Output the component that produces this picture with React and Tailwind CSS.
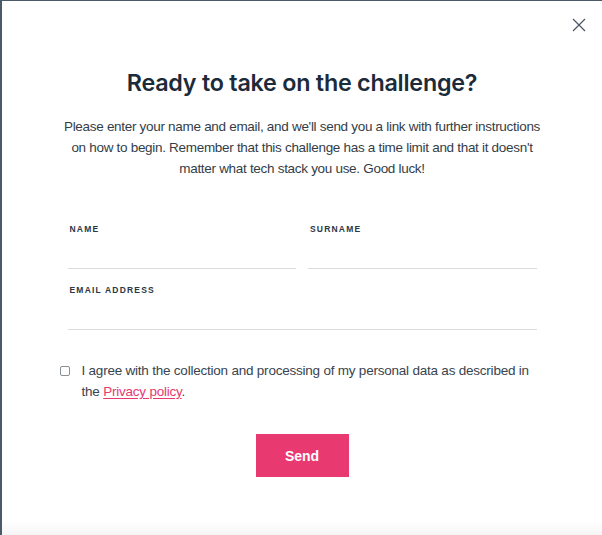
import React, { useState } from 'react';

function CloseIcon() {
  return (
    <svg width="14" height="14" viewBox="0 0 14 14" fill="none" stroke="#4b5563" strokeWidth="1.2">
      <path d="M1 1 L13 13 M13 1 L1 13" />
    </svg>
  );
}

function Field({ label, className = '' }) {
  return (
    <label className={`flex flex-col ${className}`}>
      <span className="pl-[2px] text-[8.5px] font-bold uppercase tracking-[0.14em] text-[#2b3846] leading-[12px]">
        {label}
      </span>
      <input className="mt-[22px] h-[12px] border-b-[1.5px] border-[#dcdcdc] outline-none bg-transparent" />
    </label>
  );
}

export default function App() {
  const [agreed, setAgreed] = useState(false);

  return (
    <div
      className="relative h-[535px] w-full overflow-hidden border-l-2 border-t border-[#4b5a69] bg-white text-[#2b3846]"
      style={{ fontFamily: '"Liberation Sans", Arial, sans-serif' }}
    >
      <button className="absolute right-[16px] top-[17px] p-0" aria-label="Close">
        <CloseIcon />
      </button>

      <div className="flex flex-col items-center pt-[66px]">
        <h1 className="font-['Inter',sans-serif] text-[23.3px] font-semibold leading-[32px] tracking-[-0.01em] text-[#1c2b3a]">
          Ready to take on the challenge?
        </h1>

        <p className="mt-[17px] whitespace-nowrap text-center text-[13.5px] leading-[21px] tracking-[-0.3px] text-[#333d47]">
          Please enter your name and email, and we'll send you a link with further instructions
          <br />
          on how to begin. Remember that this challenge has a time limit and that it doesn't
          <br />
          matter what tech stack you use. Good luck!
        </p>

        <form className="mt-[44px] flex w-[469px] flex-col" onSubmit={(e) => e.preventDefault()}>
          <div className="grid grid-cols-2 gap-x-[12px]">
            <Field label="Name" />
            <Field label="Surname" />
          </div>
          <Field label="Email address" className="mt-[15px]" />
        </form>

        <div className="mt-[30px] ml-[-10px] flex w-[475px] items-start gap-[12px]">
          <input
            type="checkbox"
            checked={agreed}
            onChange={(e) => setAgreed(e.target.checked)}
            className="mt-[6px] h-[10px] w-[10px] shrink-0 appearance-none rounded-[2px] border border-[#8a8f96] bg-white"
          />
          <p className="whitespace-nowrap text-[13.5px] leading-[21px] tracking-[-0.22px] text-[#38444f]">
            I agree with the collection and processing of my personal data as described in
            <br />
            the <a href="#" className="text-[#e8396f] underline underline-offset-2">Privacy policy</a>.
          </p>
        </div>

        <button className="mt-[32px] h-[43px] w-[93px] bg-[#e83a70] pt-[2px] text-[14px] font-bold text-white">
          Send
        </button>
      </div>

      <div className="absolute bottom-0 left-0 right-0 h-[14px] bg-gradient-to-b from-white to-[#f5f5f5]" />
    </div>
  );
}
